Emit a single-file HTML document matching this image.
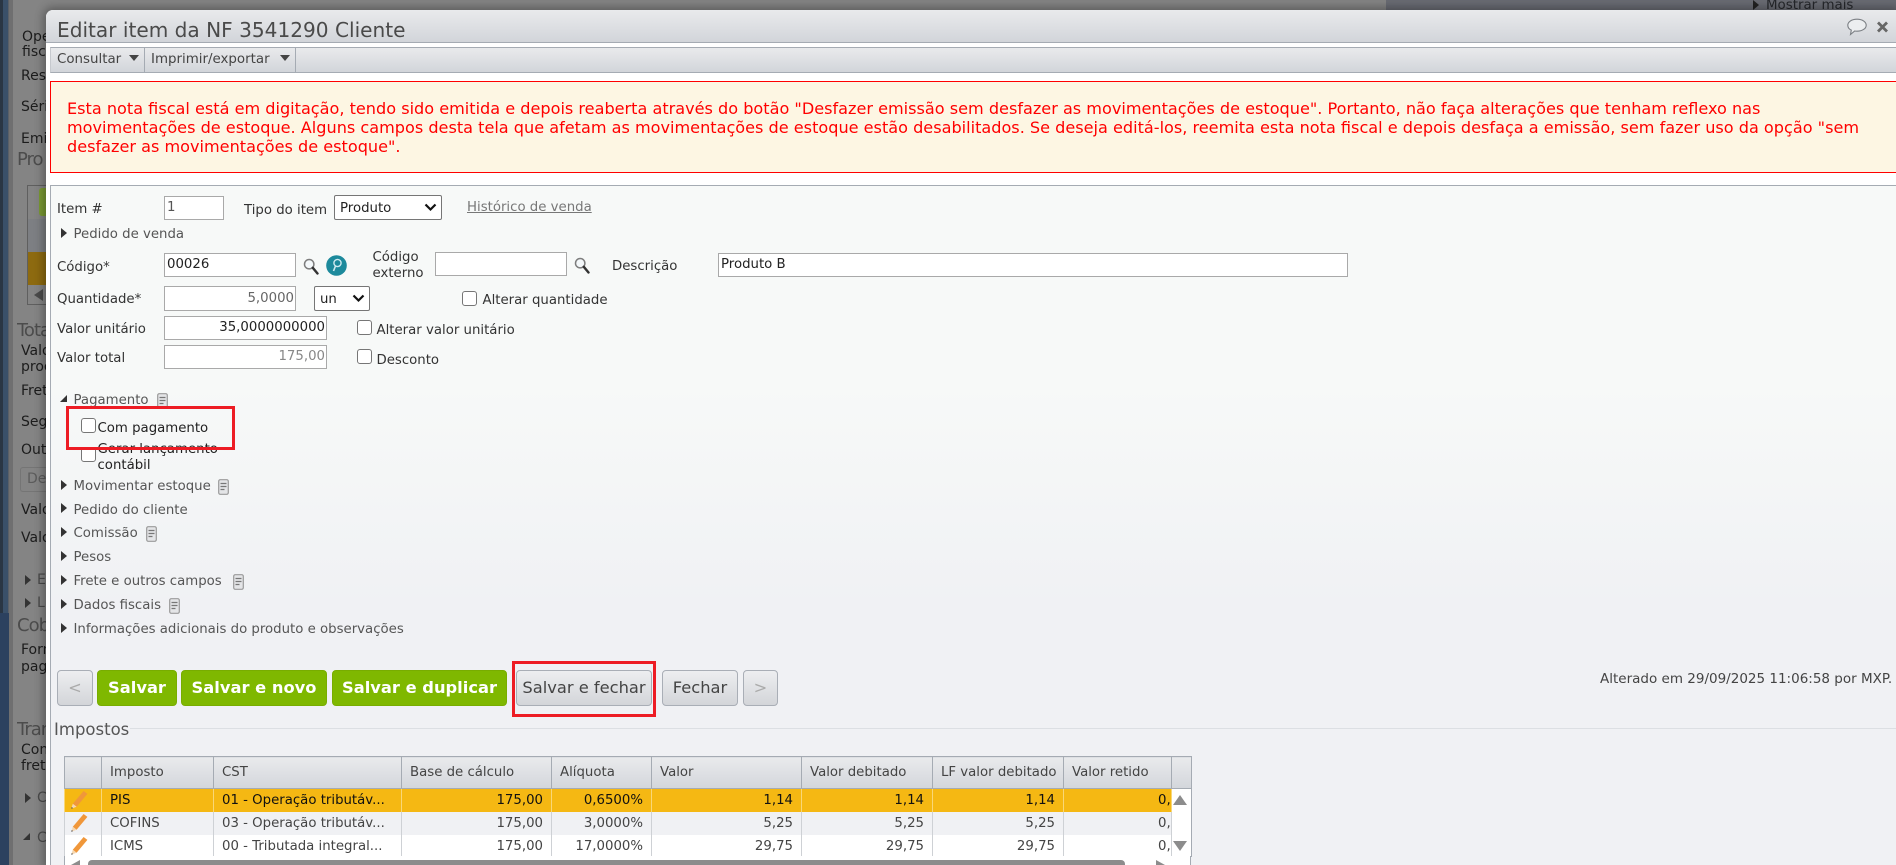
<!DOCTYPE html>
<html lang="pt-BR">
<head>
<meta charset="utf-8">
<title>Editar item da NF 3541290 Cliente</title>
<style>
*{box-sizing:border-box}
html,body{margin:0;padding:0;width:1896px;height:865px;overflow:hidden;background:#848484;font-family:"DejaVu Sans","Liberation Sans",sans-serif;font-size:13px;color:#333}
.a{position:absolute}
.t{position:absolute;white-space:nowrap;line-height:20px;height:20px}
.t.l,.t.g{margin-top:1px}
.bg{color:#1c1c1c;font-size:14px;overflow:hidden}
.bgh{color:#4c4c4c;font-size:18px;letter-spacing:-1px;overflow:hidden}
#modal{position:absolute;left:46px;top:10px;width:1850px;height:855px;background:#fff;border-top-left-radius:7px;box-shadow:0 0 9px 3px rgba(0,0,0,.3)}
.grad{background:linear-gradient(#e9eaec,#d2d5da)}
input[type=text]{position:absolute;margin:0;border:1px solid #a9a9a9;background:#fff;padding:0 2px 1px 2px;font:13.3px "DejaVu Sans",sans-serif;color:#222;border-radius:0;outline:0}
input.r{text-align:right;padding-right:1px;color:#666}
input[type=checkbox]{appearance:none;-webkit-appearance:none;position:absolute;margin:0;width:15px;height:15px;border:1px solid #767676;border-radius:3px;background:#fff}
select{appearance:none;-webkit-appearance:none;position:absolute;margin:0;border:1px solid #767676;border-radius:2px;background:#fff;font:13.3px "DejaVu Sans",sans-serif;color:#222;padding:2px 0 0 5px}
.l{font-size:13.3px;color:#333}
.g{font-size:13.3px;color:#555}
.tri{position:absolute;width:0;height:0;border-top:5.5px solid transparent;border-bottom:5.5px solid transparent;border-left:6px solid #333}
.btn{position:absolute;top:670px;height:36px;border-radius:4px;text-align:center;line-height:33px;white-space:nowrap;font-size:16.3px}
.gb{background:#7fb800;border:1px solid #78ad00;color:#fff;font-weight:bold}
.nb{background:linear-gradient(#edeef0,#d3d5d9);border:1px solid #a9aeb6;color:#444}
table{position:absolute;left:64px;top:756px;width:1127px;border-collapse:collapse;table-layout:fixed;font-size:13.3px;color:#444}
th{height:32px;font-weight:normal;text-align:left;padding:0 0 0 8px;background:linear-gradient(#e9eaec,#d3d6db);border:1px solid #a5abb3;white-space:nowrap;overflow:hidden}
td{padding:2px 8px 0;white-space:nowrap;overflow:hidden;border-left:1px solid #ced1d5;border-right:1px solid #ced1d5;text-align:left;line-height:18px}
td.n{text-align:right}
td.c{padding:2px 0 0 94px}
tr.s td{background:#f5b813;color:#111;height:23px;border-color:#f9d777}
tr.e td{background:#f0f1f4;height:23px}
tr.w td{background:#fff;height:22px}
td.p{padding:0;position:relative}
</style>
</head>
<body>
<svg width="0" height="0" style="position:absolute">
<defs>
<symbol id="doc" viewBox="0 0 11 16"><rect x=".7" y=".7" width="9.6" height="14.6" rx="1.5" fill="#e4e5e7" stroke="#9a9a9a" stroke-width="1.2"/><path d="M2.5 4.5h6M2.5 7.5h6M2.5 10.5h4" stroke="#777" stroke-width="1.2"/></symbol>
<symbol id="pen" viewBox="0 0 18 20"><path d="M13.6 1 17.4 3.9 6.6 16.8 2.8 13.7Z" fill="#f0973a"/><path d="M2.8 13.7 6.6 16.8 1.2 18.8Z" fill="#f6d7b0"/><path d="M1.8 17 1.2 18.8 3.1 18.1Z" fill="#444"/></symbol>
<symbol id="lup" viewBox="0 0 16 17"><circle cx="6.2" cy="6.2" r="4.7" fill="#f4f8fa" stroke="#7d7d7d" stroke-width="1.5"/><path d="M9.8 9.8 14.5 15.5" stroke="#333" stroke-width="2.4" stroke-linecap="round"/></symbol>
</defs>
</svg>

<!-- Background page -->
<div class="a" style="left:0;top:0;width:9px;height:865px;background:#2c415f"></div>
<div class="a" style="left:0;top:0;width:3px;height:613px;background:#2a3644"></div>
<div class="a" style="left:3px;top:0;width:5px;height:613px;background:#3a5069"></div>
<div class="a" style="left:8px;top:0;width:1px;height:613px;background:#5a6068"></div>
<div class="a" style="left:9px;top:0;width:4px;height:865px;background:#6f6f70"></div>
<div class="a" style="left:1386px;top:0;width:510px;height:10px;background:#696b73"></div>
<div class="t bg" style="left:1766px;top:-4px;color:#25272b;font-size:13.4px">Mostrar mais</div>
<div class="tri" style="left:1753px;top:0;border-left-color:#222"></div>

<div class="t bg" style="left:22px;top:27px;width:24px">Ope</div>
<div class="t bg" style="left:22px;top:42px;width:24px">fisc</div>
<div class="t bg" style="left:21px;top:66px;width:25px">Res</div>
<div class="t bg" style="left:21px;top:97px;width:25px">Séri</div>
<div class="t bg" style="left:21px;top:129px;width:25px">Emi</div>
<div class="t bgh" style="left:17px;top:150px;width:29px">Pro</div>
<div class="a" style="left:27px;top:185px;width:19px;height:120px;border:1px solid #5f5f5f;border-right:0;background:#848484"></div>
<div class="a" style="left:39px;top:188px;width:7px;height:28px;background:#7b9a33;border-radius:3px 0 0 3px"></div>
<div class="a" style="left:28px;top:219px;width:18px;height:33px;background:#7d7f83"></div>
<div class="a" style="left:28px;top:252px;width:18px;height:33px;background:#8d6a10"></div>
<div class="a" style="left:34px;top:289px;border-top:6px solid transparent;border-bottom:6px solid transparent;border-right:9px solid #4a4a4a"></div>
<div class="t bgh" style="left:17px;top:321px;width:29px">Tota</div>
<div class="t bg" style="left:21px;top:341px;width:25px">Valo</div>
<div class="t bg" style="left:21px;top:357px;width:25px">proc</div>
<div class="t bg" style="left:21px;top:381px;width:25px">Fret</div>
<div class="t bg" style="left:21px;top:412px;width:25px">Seg</div>
<div class="t bg" style="left:21px;top:440px;width:25px">Out</div>
<div class="a" style="left:20px;top:467px;width:26px;height:25px;border:1px solid #757575;border-right:0;border-radius:3px 0 0 3px"></div>
<div class="t bg" style="left:27px;top:469px;width:19px;color:#5c5c5c">De</div>
<div class="t bg" style="left:21px;top:500px;width:25px">Valo</div>
<div class="t bg" style="left:21px;top:528px;width:25px">Valo</div>
<div class="tri" style="left:25px;top:575px"></div>
<div class="t bg" style="left:37px;top:570px;width:9px;color:#4a4a4a">E</div>
<div class="tri" style="left:25px;top:598px"></div>
<div class="t bg" style="left:37px;top:593px;width:9px;color:#4a4a4a">L</div>
<div class="t bgh" style="left:17px;top:616px;width:29px">Cob</div>
<div class="t bg" style="left:21px;top:640px;width:25px">Forn</div>
<div class="t bg" style="left:21px;top:657px;width:25px">pag</div>
<div class="t bgh" style="left:17px;top:720px;width:29px">Tran</div>
<div class="t bg" style="left:21px;top:740px;width:25px">Con</div>
<div class="t bg" style="left:21px;top:756px;width:25px">fret</div>
<div class="tri" style="left:25px;top:793px"></div>
<div class="t bg" style="left:37px;top:788px;width:9px;color:#4a4a4a">C</div>
<div class="a" style="left:23px;top:833px;border-bottom:7px solid #333;border-left:7px solid transparent"></div>
<div class="t bg" style="left:37px;top:828px;width:9px;color:#4a4a4a">C</div>

<!-- Modal -->
<div id="modal"></div>
<div class="a grad" style="left:46px;top:10px;width:1850px;height:33px;border-bottom:1px solid #a5abb3;border-top-left-radius:7px"></div>
<div class="t" style="left:57px;top:20px;font-size:20.1px;color:#4a4a4a">Editar item da NF 3541290 Cliente</div>
<svg class="a" style="left:1846px;top:18px" width="22" height="18" viewBox="0 0 22 18"><path d="M11 1.2c5.2 0 9.2 2.6 9.2 6s-4 6-9.2 6c-.8 0-1.6 0-2.3-.2L4.5 16.5l.8-4.4C3 11 1.8 9.2 1.8 7.2c0-3.4 4-6 9.2-6Z" fill="#eceef0" stroke="#7b7f84" stroke-width="1.1"/></svg>
<svg class="a" style="left:1876px;top:21px" width="13" height="12" viewBox="0 0 13 12"><path d="M2 1.5 11 10.5M11 1.5 2 10.5" stroke="#666" stroke-width="2.8"/></svg>

<div class="a grad" style="left:50px;top:47px;width:1846px;height:26px;border-top:1px solid #a5abb3;border-bottom:1px solid #a5abb3;border-left:1px solid #c6c9ce"></div>
<div class="a" style="left:144px;top:48px;width:1px;height:24px;background:#a5abb3"></div>
<div class="a" style="left:295px;top:48px;width:1px;height:24px;background:#a5abb3"></div>
<div class="t" style="left:57px;top:50px;font-size:13.4px;color:#444">Consultar</div>
<div class="a" style="left:129px;top:55px;border-top:6px solid #444;border-left:5px solid transparent;border-right:5px solid transparent"></div>
<div class="t" style="left:151px;top:50px;font-size:13.4px;color:#444">Imprimir/exportar</div>
<div class="a" style="left:280px;top:55px;border-top:6px solid #444;border-left:5px solid transparent;border-right:5px solid transparent"></div>

<div class="a" style="left:50px;top:81px;width:1846px;height:92px;background:#fdf6e3;border:1px solid #f00;border-right:0"></div>
<div class="a" style="left:67px;top:99px;width:1825px;font-size:16.1px;line-height:19px;color:#f00">
<div style="white-space:nowrap">Esta nota fiscal está em digitação, tendo sido emitida e depois reaberta através do botão "Desfazer emissão sem desfazer as movimentações de estoque". Portanto, não faça alterações que tenham reflexo nas</div>
<div style="white-space:nowrap">movimentações de estoque. Alguns campos desta tela que afetam as movimentações de estoque estão desabilitados. Se deseja editá-los, reemita esta nota fiscal e depois desfaça a emissão, sem fazer uso da opção "sem</div>
<div style="white-space:nowrap">desfazer as movimentações de estoque".</div>
</div>

<!-- Form panel -->
<div class="a" style="left:50px;top:185px;width:1846px;height:680px;border-top:1px solid #a5abb3;border-left:1px solid #a5abb3;background:linear-gradient(#f7f9f8 0,#f7f9f8 200px,#f0f1f4 420px,#f0f1f4 100%)"></div>

<div class="t l" style="left:57px;top:199px">Item #</div>
<input type="text" value="1" style="left:164px;top:196px;width:60px;height:24px;color:#555">
<div class="t l" style="left:244px;top:200px">Tipo do item</div>
<select style="left:334px;top:195px;width:108px;height:25px"><option>Produto</option></select>
<svg class="a" style="left:424px;top:203px" width="13" height="9" viewBox="0 0 13 9"><path d="M1.5 1.5 6.5 6.5 11.5 1.5" fill="none" stroke="#111" stroke-width="2.2"/></svg>
<div class="t" style="left:467px;top:198px;font-size:13.3px;color:#777;text-decoration:underline">Histórico de venda</div>

<div class="tri" style="left:61px;top:228px"></div>
<div class="t g" style="left:73.5px;top:224px">Pedido de venda</div>

<div class="t l" style="left:57px;top:257px">Código*</div>
<input type="text" value="00026" style="left:164px;top:253px;width:132px;height:24px">
<svg class="a" style="left:303px;top:258px" width="16" height="17"><use href="#lup"/></svg>
<svg class="a" style="left:326px;top:255px" width="21" height="21" viewBox="0 0 21 21"><circle cx="10.5" cy="10.5" r="10.3" fill="#1d8a9c"/><circle cx="11.5" cy="8" r="3.6" fill="none" stroke="#cfeaf0" stroke-width="1.4"/><path d="M9.5 11 7.5 16" stroke="#cfeaf0" stroke-width="1.6"/></svg>
<div class="t l" style="left:372.5px;top:247px">Código</div>
<div class="t l" style="left:372.5px;top:263px">externo</div>
<input type="text" style="left:435px;top:252px;width:132px;height:24px">
<svg class="a" style="left:574px;top:257px" width="16" height="17"><use href="#lup"/></svg>
<div class="t l" style="left:612px;top:256px">Descrição</div>
<input type="text" value="Produto B" style="left:718px;top:253px;width:630px;height:24px">

<div class="t l" style="left:57px;top:289px">Quantidade*</div>
<input type="text" class="r" value="5,0000" style="left:164px;top:286px;width:132px;height:25px">
<select style="left:314px;top:286px;width:56px;height:25px"><option>un</option></select>
<svg class="a" style="left:352px;top:294px" width="13" height="9" viewBox="0 0 13 9"><path d="M1.5 1.5 6.5 6.5 11.5 1.5" fill="none" stroke="#111" stroke-width="2.2"/></svg>
<input type="checkbox" style="left:462px;top:291px">
<div class="t l" style="left:482.5px;top:290px">Alterar quantidade</div>

<div class="t l" style="left:57px;top:319px">Valor unitário</div>
<input type="text" class="r" value="35,0000000000" style="left:164px;top:316px;width:163px;height:24px;color:#222">
<input type="checkbox" style="left:356.5px;top:320px">
<div class="t l" style="left:376.5px;top:320px">Alterar valor unitário</div>

<div class="t l" style="left:57px;top:348px">Valor total</div>
<input type="text" class="r" value="175,00" style="left:164px;top:345px;width:163px;height:24px;color:#888">
<input type="checkbox" style="left:356.5px;top:349px">
<div class="t l" style="left:376.5px;top:350px">Desconto</div>

<div class="a" style="left:60px;top:395px;border-bottom:7px solid #333;border-left:7px solid transparent"></div>
<div class="t g" style="left:73.5px;top:390px">Pagamento</div>
<svg class="a" style="left:157px;top:393px" width="11" height="16"><use href="#doc"/></svg>

<input type="checkbox" style="left:81px;top:418px">
<div class="t l" style="left:97.5px;top:418px;color:#222">Com pagamento</div>
<input type="checkbox" style="left:81px;top:447px">
<div class="t l" style="left:97.5px;top:439px;color:#222">Gerar lançamento</div>
<div class="t l" style="left:97.5px;top:455px;color:#222">contábil</div>
<div class="a" style="left:66px;top:406px;width:169px;height:44px;border:3.4px solid #ed1c24"></div>

<div class="tri" style="left:61px;top:480px"></div>
<div class="t g" style="left:73.5px;top:476px">Movimentar estoque</div>
<svg class="a" style="left:218px;top:479px" width="11" height="16"><use href="#doc"/></svg>
<div class="tri" style="left:61px;top:503px"></div>
<div class="t g" style="left:73.5px;top:500px">Pedido do cliente</div>
<div class="tri" style="left:61px;top:527px"></div>
<div class="t g" style="left:73.5px;top:523px">Comissão</div>
<svg class="a" style="left:146px;top:526px" width="11" height="16"><use href="#doc"/></svg>
<div class="tri" style="left:61px;top:551px"></div>
<div class="t g" style="left:73.5px;top:547px">Pesos</div>
<div class="tri" style="left:61px;top:575px"></div>
<div class="t g" style="left:73.5px;top:571px">Frete e outros campos</div>
<svg class="a" style="left:233px;top:574px" width="11" height="16"><use href="#doc"/></svg>
<div class="tri" style="left:61px;top:599px"></div>
<div class="t g" style="left:73.5px;top:595px">Dados fiscais</div>
<svg class="a" style="left:169px;top:598px" width="11" height="16"><use href="#doc"/></svg>
<div class="tri" style="left:61px;top:623px"></div>
<div class="t g" style="left:73.5px;top:619px">Informações adicionais do produto e observações</div>

<!-- Buttons -->
<div class="btn nb" style="left:57px;width:36px;color:#aaa">&lt;</div>
<div class="btn gb" style="left:97px;width:80px">Salvar</div>
<div class="btn gb" style="left:181px;width:146px">Salvar e novo</div>
<div class="btn gb" style="left:332px;width:175px">Salvar e duplicar</div>
<div class="btn nb" style="left:516px;width:136px">Salvar e fechar</div>
<div class="a" style="left:512px;top:661px;width:144px;height:56px;border:3.4px solid #ed1c24"></div>
<div class="btn nb" style="left:662px;width:76px">Fechar</div>
<div class="btn nb" style="left:743px;width:35px;color:#aaa">&gt;</div>
<div class="t" style="left:1600px;top:669px;font-size:13.5px;color:#444">Alterado em 29/09/2025 11:06:58 por MXP.</div>

<!-- Impostos -->
<div class="a" style="left:130px;top:728px;width:1766px;height:1px;background:#dcdfe3"></div>
<div class="t" style="left:54px;top:720px;font-size:16.5px;color:#555">Impostos</div>

<table>
<colgroup><col style="width:37px"><col style="width:112px"><col style="width:188px"><col style="width:150px"><col style="width:100px"><col style="width:150px"><col style="width:131px"><col style="width:131px"><col style="width:108px"><col style="width:20px"></colgroup>
<tr><th></th><th>Imposto</th><th>CST</th><th>Base de cálculo</th><th>Alíquota</th><th>Valor</th><th>Valor debitado</th><th>LF valor debitado</th><th>Valor retido</th><th></th></tr>
<tr class="s"><td class="p"><svg style="position:absolute;left:5px;top:1px" width="18" height="20"><use href="#pen"/></svg></td><td>PIS</td><td>01 - Operação tributáv...</td><td class="n">175,00</td><td class="n">0,6500%</td><td class="n">1,14</td><td class="n">1,14</td><td class="n">1,14</td><td class="c">0,00</td><td style="background:#fff;border:0;border-right:1px solid #a5abb3"></td></tr>
<tr class="e"><td class="p"><svg style="position:absolute;left:5px;top:1px" width="18" height="20"><use href="#pen"/></svg></td><td>COFINS</td><td>03 - Operação tributáv...</td><td class="n">175,00</td><td class="n">3,0000%</td><td class="n">5,25</td><td class="n">5,25</td><td class="n">5,25</td><td class="c">0,00</td><td style="background:#fff;border:0;border-right:1px solid #a5abb3"></td></tr>
<tr class="w"><td class="p"><svg style="position:absolute;left:5px;top:1px" width="18" height="20"><use href="#pen"/></svg></td><td>ICMS</td><td>00 - Tributada integral...</td><td class="n">175,00</td><td class="n">17,0000%</td><td class="n">29,75</td><td class="n">29,75</td><td class="n">29,75</td><td class="c">0,00</td><td style="background:#fff;border:0;border-right:1px solid #a5abb3"></td></tr>
</table>
<div class="a" style="left:64px;top:856px;width:1127px;height:9px;background:#fff;border-left:1px solid #a5abb3;border-right:1px solid #a5abb3"></div>
<div class="a" style="left:88px;top:860px;width:1037px;height:5px;background:#8c8c8c;border-radius:4px 4px 0 0"></div>
<div class="a" style="left:71px;top:860px;border-bottom:5px solid #8c8c8c;border-left:9px solid transparent"></div>
<div class="a" style="left:1156px;top:860px;border-bottom:5px solid #8c8c8c;border-right:9px solid transparent"></div>
<div class="a" style="left:1173px;top:795px;border-bottom:10px solid #8c8c8c;border-left:7px solid transparent;border-right:7px solid transparent"></div>
<div class="a" style="left:1173px;top:841px;border-top:10px solid #8c8c8c;border-left:7px solid transparent;border-right:7px solid transparent"></div>
</body>
</html>
